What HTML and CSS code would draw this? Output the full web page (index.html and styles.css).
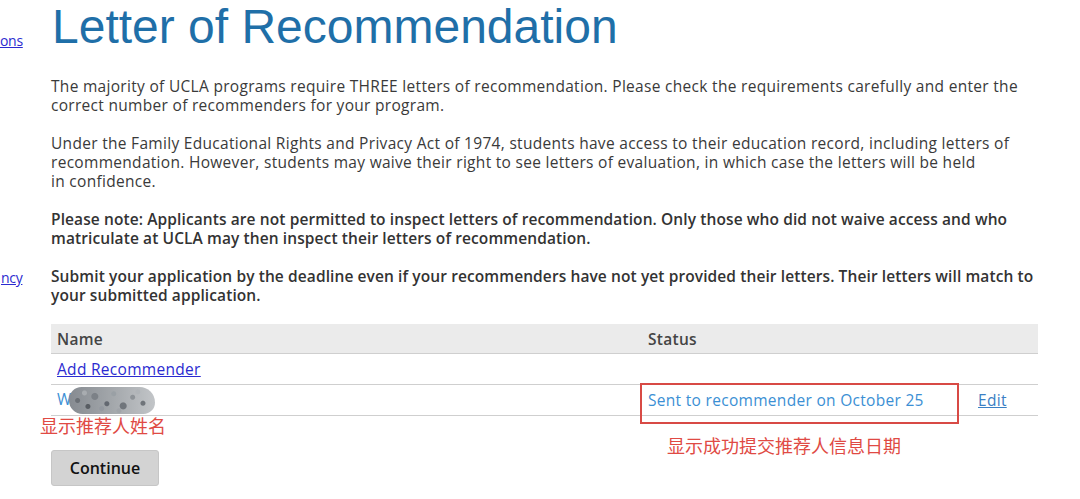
FILE: index.html
```html
<!DOCTYPE html>
<html lang="en">
<head>
<meta charset="utf-8">
<title>Letter of Recommendation</title>
<link rel="stylesheet" href="styles.css">
</head>
<body>
<div class="page">
  <nav class="sidebar">
    <a class="side-link side-link--top" href="#">ons</a>
    <a class="side-link side-link--mid" href="#">ncy</a>
  </nav>
  <main class="content">
    <h1 class="title">Letter of Recommendation</h1>
    <p class="para">The majority of UCLA programs require THREE letters of recommendation. Please check the requirements carefully and enter the correct number of recommenders for your program.</p>
    <p class="para">Under the Family Educational Rights and Privacy Act of 1974, students have access to their education record, including letters of recommendation. However, students may waive their right to see letters of evaluation, in which case the letters will be held<br>in confidence.</p>
    <p class="para para--strong">Please note: Applicants are not permitted to inspect letters of recommendation. Only those who did not waive access and who matriculate at UCLA may then inspect their letters of recommendation.</p>
    <p class="para para--strong">Submit your application by the deadline even if your recommenders have not yet provided their letters. Their letters will match to your submitted application.</p>

    <div class="table-wrap">
      <table class="rec-table">
        <thead>
          <tr><th class="col-name">Name</th><th class="col-status">Status</th><th class="col-action"></th></tr>
        </thead>
        <tbody>
          <tr><td><a class="add-link" href="#">Add Recommender</a></td><td></td><td></td></tr>
          <tr>
            <td><span class="rec-name">W</span><span class="blur"></span></td>
            <td class="status">Sent to recommender on October 25</td>
            <td><a class="edit-link" href="#">Edit</a></td>
          </tr>
        </tbody>
      </table>
      <div class="mark-box"></div>
      <div class="note note--name">显示推荐人姓名</div>
      <div class="note note--date">显示成功提交推荐人信息日期</div>
    </div>

    <button class="continue" type="button">Continue</button>
  </main>
</div>
</body>
</html>
```

FILE: styles.css
```css
html, body {
  margin: 0;
  padding: 0;
  background: #ffffff;
}

body {
  font-family: "Open Sans", "Noto Sans", "Liberation Sans", sans-serif;
  color: #3a3a3a;
  overflow: hidden;
}

.page {
  display: flex;
  width: 1080px;
  height: 499px;
}

.sidebar {
  width: 51px;
  flex: none;
  display: flex;
  flex-direction: column;
  align-items: flex-start;
}

.side-link {
  color: #2b2bd0;
  font-size: 14px;
  line-height: 19px;
  white-space: nowrap;
  text-decoration: underline;
  letter-spacing: -0.3px;
}

.side-link--top {
  margin-top: 31px;
}

.side-link--mid {
  margin-top: 218px;
  margin-left: 1px;
}

.content {
  width: 987px;
  flex: none;
  position: relative;
}

.title {
  margin: 3px 0 0 1px;
  font-family: "Liberation Sans", Arial, sans-serif;
  font-weight: 400;
  font-size: 48px;
  line-height: 48px;
  color: #1f6fa8;
}

.para {
  margin: 26px 0 0 0;
  font-size: 15.5px;
  line-height: 19px;
  color: #3a3a3a;
  width: 985px;
  letter-spacing: 0.3px;
}

.para + .para {
  margin-top: 19px;
}

.para--strong {
  font-weight: 600;
  color: #333333;
  letter-spacing: 0.1px;
}

.table-wrap {
  position: relative;
  margin-top: 19px;
}

.rec-table {
  width: 987px;
  border-collapse: collapse;
  font-size: 15.5px;
  letter-spacing: 0.3px;
}

.rec-table th {
  background: #ebebeb;
  text-align: left;
  font-weight: 600;
  color: #444444;
  height: 29px;
  padding: 0 6px;
  border-bottom: 1px solid #cfcfcf;
}

.rec-table td {
  height: 30px;
  padding: 0 6px;
  border-bottom: 1px solid #cfcfcf;
}

.col-name { width: 579px; }
.col-status { width: 318px; }

.add-link {
  color: #2b2bd0;
  text-decoration: underline;
}

.rec-name {
  color: #3b8fd4;
}

.blur {
  display: inline-block;
  vertical-align: middle;
  width: 86px;
  height: 27px;
  margin-left: -3px;
  border-radius: 13px 16px 12px 14px;
  background:
    radial-gradient(circle at 10% 50%, #6a6f75 0 2px, transparent 3px),
    radial-gradient(circle at 22% 72%, #585d63 0 2px, transparent 3px),
    radial-gradient(circle at 30% 35%, #7c8187 0 3px, transparent 4px),
    radial-gradient(circle at 44% 62%, #636870 0 2px, transparent 3px),
    radial-gradient(circle at 52% 25%, #9aa0a5 0 2px, transparent 3px),
    radial-gradient(circle at 63% 70%, #70757b 0 3px, transparent 4px),
    radial-gradient(circle at 74% 38%, #8d9297 0 2px, transparent 3px),
    radial-gradient(circle at 86% 60%, #6f747a 0 2px, transparent 3px),
    radial-gradient(circle at 18% 22%, #a8acb0 0 2px, transparent 3px),
    radial-gradient(circle at 58% 88%, #a0a4a9 0 2px, transparent 3px),
    radial-gradient(circle at 38% 80%, #9499a0 0 2px, transparent 3px),
    radial-gradient(circle at 80% 18%, #b0b4b8 0 2px, transparent 3px),
    linear-gradient(90deg, #868b91, #a3a7ab 50%, #c2c5c8);
}

.status {
  color: #3b8fd4;
}

.edit-link {
  color: #3b80c4;
  text-decoration: underline;
}

.mark-box {
  position: absolute;
  left: 589px;
  top: 59px;
  width: 315px;
  height: 37px;
  border: 2px solid #d84a45;
}

.note {
  position: absolute;
  font-family: "Noto Sans CJK SC", sans-serif;
  font-size: 18px;
  line-height: 20px;
  color: #e04a44;
  white-space: nowrap;
  letter-spacing: 0;
}

.note--name {
  left: -11px;
  top: 91px;
}

.note--date {
  left: 616px;
  top: 111px;
}

.continue {
  display: block;
  margin-top: 34px;
  width: 108px;
  height: 36px;
  background: #d3d3d3;
  border: 1px solid #c6c6c6;
  border-radius: 3px;
  font-family: "Open Sans", "Liberation Sans", sans-serif;
  font-size: 16px;
  font-weight: 600;
  color: #111111;
  padding: 0;
}
```
